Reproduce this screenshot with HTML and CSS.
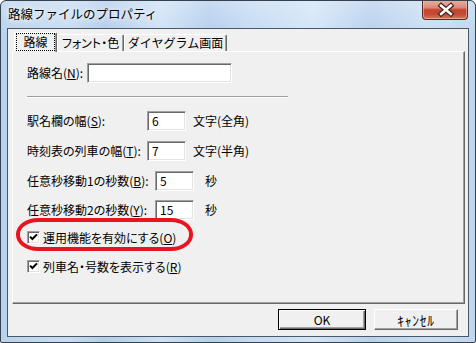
FILE: index.html
```html
<!DOCTYPE html>
<html lang="ja">
<head>
<meta charset="utf-8">
<title>路線ファイルのプロパティ</title>
<link rel="stylesheet" href="styles.css">
</head>
<body>
<div class="window">
  <div class="titlebar">
    <span class="title">路線ファイルのプロパティ</span>
    <div class="close">
      <svg width="45" height="18" viewBox="0 0 45 18">
        <path d="M18.5 4.5 L28.5 13 M28.5 4.5 L18.5 13" stroke="#3b2320" stroke-width="5" stroke-linecap="square"/>
        <path d="M18.5 4.5 L28.5 13 M28.5 4.5 L18.5 13" stroke="#ffffff" stroke-width="2.6" stroke-linecap="square"/>
      </svg>
    </div>
  </div>
  <div class="client">
    <div class="tabs">
      <div class="tab sel"><span class="focus">路線</span></div>
      <div class="tab t2">フォント・色</div>
      <div class="tab t3">ダイヤグラム画面</div>
    </div>
    <div class="panel">
      <div class="row">
        <span class="lbl w-name">路線名(<u>N</u>):</span>
        <div class="edit w-long"></div>
      </div>
      <div class="sep"></div>
      <div class="row r-s">
        <span class="lbl w-a">駅名欄の幅(<u>S</u>):</span>
        <div class="edit w-num">6</div>
        <span class="unit u-a">文字(全角)</span>
      </div>
      <div class="row r-t">
        <span class="lbl w-a">時刻表の列車の幅(<u>T</u>):</span>
        <div class="edit w-num">7</div>
        <span class="unit u-a">文字(半角)</span>
      </div>
      <div class="row r-b">
        <span class="lbl w-b">任意秒移動1の秒数(<u>B</u>):</span>
        <div class="edit w-num">5</div>
        <span class="unit u-b">秒</span>
      </div>
      <div class="row r-y">
        <span class="lbl w-b">任意秒移動2の秒数(<u>Y</u>):</span>
        <div class="edit w-num">15</div>
        <span class="unit u-b">秒</span>
      </div>
      <div class="check c-o">
        <span class="box"><svg width="9" height="9" viewBox="0 0 9 9"><path d="M1 3.6 L3.4 6 L8 1.4" fill="none" stroke="#000" stroke-width="2"/></svg></span>
        <span class="ctext">運用機能を有効にする(<u>O</u>)</span>
      </div>
      <div class="check c-r">
        <span class="box"><svg width="9" height="9" viewBox="0 0 9 9"><path d="M1 3.6 L3.4 6 L8 1.4" fill="none" stroke="#000" stroke-width="2"/></svg></span>
        <span class="ctext">列車名・号数を表示する(<u>R</u>)</span>
      </div>
      <div class="mark"></div>
    </div>
    <div class="buttons">
      <div class="btn ok">OK</div>
      <div class="btn cancel">ｷｬﾝｾﾙ</div>
    </div>
  </div>
</div>
</body>
</html>
```

FILE: styles.css
```css
html, body {
  margin: 0;
  padding: 0;
  background: #ffffff;
}

body {
  font-family: "Noto Sans CJK JP", "Noto Sans", sans-serif;
  font-size: 12px;
  color: #000;
  font-feature-settings: "palt";
}

.window {
  width: 476px;
  height: 343px;
  box-sizing: border-box;
  border: 1px solid #36414f;
  border-radius: 6px 6px 2px 2px;
  background-color: #bdd5ee;
  background-image:
    linear-gradient(180deg, rgba(255,255,255,0.25) 0%, rgba(255,255,255,0) 10%),
    linear-gradient(90deg, #b9d2ed 0%, #c8ddf3 14%, #b3cdea 22%, #cfe2f6 34%, #b5cfec 44%, #c4daf2 52%, #d3e5f7 66%, #b8d1ed 78%, #cadef3 90%, #bfd6ef 100%);
  display: flex;
  flex-direction: column;
  overflow: hidden;
}

.titlebar {
  height: 27px;
  display: flex;
  align-items: flex-start;
  padding-left: 7px;
}

.title {
  margin-top: 4px;
  line-height: 18px;
  font-size: 12.5px;
  font-feature-settings: normal;
  color: #000;
  text-shadow: 0 0 5px rgba(255,255,255,0.95), 0 0 9px rgba(255,255,255,0.8);
}

.close {
  margin-left: auto;
  margin-right: 7px;
  margin-top: -1px;
  width: 46px;
  height: 20px;
  box-sizing: border-box;
  border: 1px solid #5b2a22;
  border-top: none;
  border-radius: 0 0 4px 4px;
  background: linear-gradient(180deg, #e9b0a3 0%, #da8877 40%, #c5452d 52%, #c34a33 75%, #d8775f 100%);
  box-shadow: inset 0 0 0 1px rgba(255,220,210,0.45);
  display: flex;
  align-items: center;
  justify-content: center;
}

.close svg {
  display: block;
}

.client {
  margin: 0 6px;
  height: 309px;
  box-sizing: border-box;
  border: 1px solid #4b5866;
  background: #f0f0f0;
  display: flex;
  flex-direction: column;
}

.tabs {
  height: 22px;
  display: flex;
  align-items: flex-end;
  padding-left: 6px;
  position: relative;
  z-index: 1;
}

.tab {
  height: 17px;
  box-sizing: border-box;
  border: 1px solid;
  border-color: #fff #696969 transparent #fff;
  border-bottom: none;
  border-radius: 2px 2px 0 0;
  box-shadow: inset -1px 0 0 #a0a0a0;
  background: #f0f0f0;
  display: flex;
  align-items: center;
  justify-content: center;
  line-height: 14px;
}

.tab.sel {
  width: 43px;
  height: 20px;
  margin-bottom: -1px;
  padding: 0 1px 1px 1px;
  align-items: stretch;
}

.focus {
  flex: 1;
  border: 1px dotted #000;
  display: flex;
  align-items: center;
  justify-content: center;
}

.t2 {
  width: 67px;
}

.t3 {
  width: 103px;
  font-feature-settings: normal;
}

.panel {
  margin: 0 3px 0 4px;
  height: 253px;
  box-sizing: border-box;
  border: 1px solid;
  border-color: #fff #696969 #696969 #fff;
  box-shadow: inset -1px -1px 0 #a0a0a0;
  padding: 11px 0 0 14px;
  position: relative;
}

.row {
  display: flex;
  align-items: center;
  height: 20px;
}

.lbl {
  line-height: 14px;
  white-space: nowrap;
}

u {
  text-decoration: underline;
  text-underline-offset: 1px;
}

.w-name { width: 60px; }
.w-a { width: 120px; }
.w-b { width: 128px; }

.edit {
  height: 20px;
  box-sizing: border-box;
  background: #fff;
  border: 1px solid;
  border-color: #a0a0a0 #fff #fff #a0a0a0;
  box-shadow: inset 1px 1px 0 #696969, inset -1px -1px 0 #e3e3e3;
  padding-left: 4px;
  line-height: 17px;
}

.w-long { width: 145px; }
.w-num { width: 39px; }

.unit { line-height: 14px; }
.u-a { margin-left: 7px; }
.u-b { margin-left: 11px; }

.sep {
  width: 261px;
  border-top: 1px solid #a0a0a0;
  border-bottom: 1px solid #fff;
  margin-top: 13px;
}

.r-s { margin-top: 13px; }
.r-t { margin-top: 10px; }
.r-b { margin-top: 10px; }
.r-y { margin-top: 9px; }

.check {
  display: flex;
  align-items: center;
  height: 13px;
}

.c-o { margin-top: 11px; }
.c-r { margin-top: 16px; }

.box {
  width: 13px;
  height: 13px;
  box-sizing: border-box;
  background: #fff;
  border: 1px solid;
  border-color: #a0a0a0 #fff #fff #a0a0a0;
  box-shadow: inset 1px 1px 0 #696969, inset -1px -1px 0 #e3e3e3;
  padding: 1px;
  display: flex;
}

.box svg { display: block; margin: 0; }

.ctext {
  margin-left: 3px;
  line-height: 14px;
  white-space: nowrap;
}

.mark {
  position: absolute;
  left: 3px;
  top: 166px;
  width: 177px;
  height: 33px;
  box-sizing: border-box;
  border: 4px solid #e8141e;
  border-radius: 22px / 16px;
}

.buttons {
  display: flex;
  justify-content: flex-end;
  gap: 8px;
  margin-top: 5px;
  padding-right: 10px;
}

.btn {
  height: 21px;
  box-sizing: border-box;
  background: #f0f0f0;
  border: 1px solid;
  border-color: #fff #696969 #696969 #fff;
  box-shadow: inset -1px -1px 0 #a0a0a0;
  display: flex;
  align-items: center;
  justify-content: center;
  line-height: 14px;
}

.ok {
  width: 88px;
  border: 1px solid #000;
  box-shadow: inset 1px 1px 0 #fff, inset -1px -1px 0 #696969, inset -2px -2px 0 #a0a0a0;
}

.cancel {
  width: 84px;
  font-size: 13.5px;
  letter-spacing: 0.8px;
}
```
